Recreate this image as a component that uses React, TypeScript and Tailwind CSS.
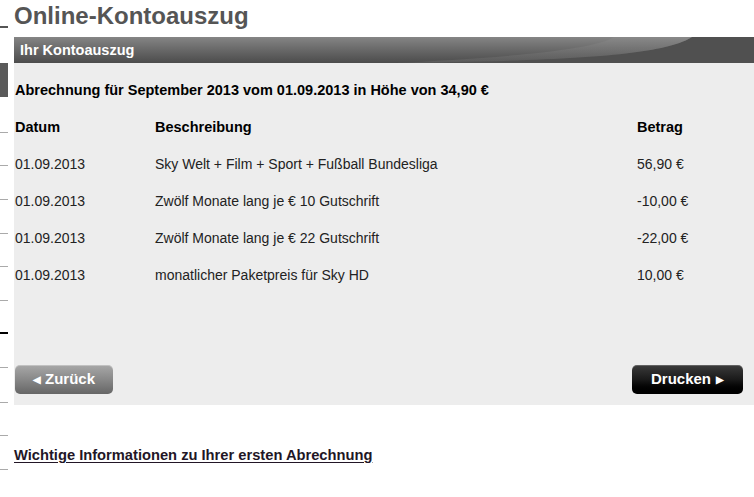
const rows = [
  { date: '01.09.2013', text: 'Sky Welt + Film + Sport + Fußball Bundesliga', amount: '56,90 €' },
  { date: '01.09.2013', text: 'Zwölf Monate lang je € 10 Gutschrift', amount: '-10,00 €' },
  { date: '01.09.2013', text: 'Zwölf Monate lang je € 22 Gutschrift', amount: '-22,00 €' },
  { date: '01.09.2013', text: 'monatlicher Paketpreis für Sky HD', amount: '10,00 €' },
]

// thin marks of the cut-off sidebar on the left edge
const marks = [132, 165, 199, 233, 266, 300, 332, 367, 402, 435, 469]

function SideStrip() {
  return (
    <div className="relative w-[8px] shrink-0">
      <div className="absolute left-0 top-[26px] h-[2px] w-[8px] bg-[#555]" />
      <div className="absolute left-0 top-[63px] h-[34px] w-[8px] bg-[#5a5a5a]" />
      {marks.map((y) => (
        <div
          key={y}
          style={{ top: y }}
          className={`absolute left-0 w-[8px] ${y === 332 ? 'h-[2px] bg-black' : 'h-px bg-[#aaa]'}`}
        />
      ))}
    </div>
  )
}

export default function App() {
  return (
    <div className="flex min-h-[497px] w-[754px] overflow-hidden bg-white font-['Liberation_Sans',Arial,sans-serif] text-[14px] text-[#222]">
      <SideStrip />
      <div className="ml-[6px] flex min-w-0 flex-1 flex-col">
        <h1 className="mt-[2px] h-[35px] text-[24px] font-bold leading-[28px] text-[#555]">
          Online-Kontoauszug
        </h1>

        <div className="relative h-[26px] overflow-hidden bg-gradient-to-b from-[#858585] to-[#4c4c4c]">
          <svg
            className="absolute inset-0 h-full w-full"
            viewBox="0 0 740 26"
            preserveAspectRatio="none"
          >
            <defs>
              <linearGradient id="sw" x1="0" y1="0" x2="0" y2="1">
                <stop offset="0" stopColor="#8e8e8e" />
                <stop offset="1" stopColor="#6a6a6a" />
              </linearGradient>
            </defs>
            <path d="M380 26 C 560 24, 650 18, 678 0 L 740 0 L 740 26 Z" fill="#505050" />
            <path d="M380 26 C 560 24, 650 18, 678 0 L 600 0 C 580 14, 470 22, 380 26 Z" fill="url(#sw)" opacity="0.45" />
          </svg>
          <div className="relative flex h-full items-center pl-[6px] pt-px text-[14.5px] font-bold text-white">
            Ihr Kontoauszug
          </div>
        </div>

        <div className="flex flex-col bg-[#ededed] pb-[11px] pl-[1px] pr-[11px] pt-[9px]">
          <div className="flex h-[37px] items-center text-[14.5px] font-bold text-black">
            Abrechnung für September 2013 vom 01.09.2013 in Höhe von 34,90 €
          </div>
          <div className="flex h-[37px] items-center text-[14.5px] font-bold text-black">
            <div className="w-[140px]">Datum</div>
            <div className="w-[482px]">Beschreibung</div>
            <div>Betrag</div>
          </div>
          {rows.map((r, i) => (
            <div key={i} className="flex h-[37px] items-center">
              <div className="w-[140px]">{r.date}</div>
              <div className="w-[482px]">{r.text}</div>
              <div>{r.amount}</div>
            </div>
          ))}

          <div className="mt-[71px] flex items-center justify-between">
            <button
              type="button"
              className="flex h-[29px] w-[98px] items-center justify-center gap-[4px] rounded-[5px] bg-gradient-to-b from-[#a8a8a8] via-[#888] to-[#666] text-[15px] font-bold text-white shadow-[inset_0_1px_0_rgba(255,255,255,0.3)]"
            >
              <span className="text-[10px]">◀</span>
              Zurück
            </button>
            <button
              type="button"
              className="flex h-[29px] w-[111px] items-center justify-center gap-[5px] rounded-[5px] bg-gradient-to-b from-[#3c3c3c] via-[#1a1a1a] to-[#000] text-[15px] font-bold text-white shadow-[inset_0_1px_0_rgba(255,255,255,0.2)]"
            >
              Drucken
              <span className="text-[10px]">▶</span>
            </button>
          </div>
        </div>

        <div className="mt-[39px]">
          <a href="#" className="text-[14.7px] font-bold text-[#221626] underline underline-offset-[2px]">
            Wichtige Informationen zu Ihrer ersten Abrechnung
          </a>
        </div>
      </div>
    </div>
  )
}
